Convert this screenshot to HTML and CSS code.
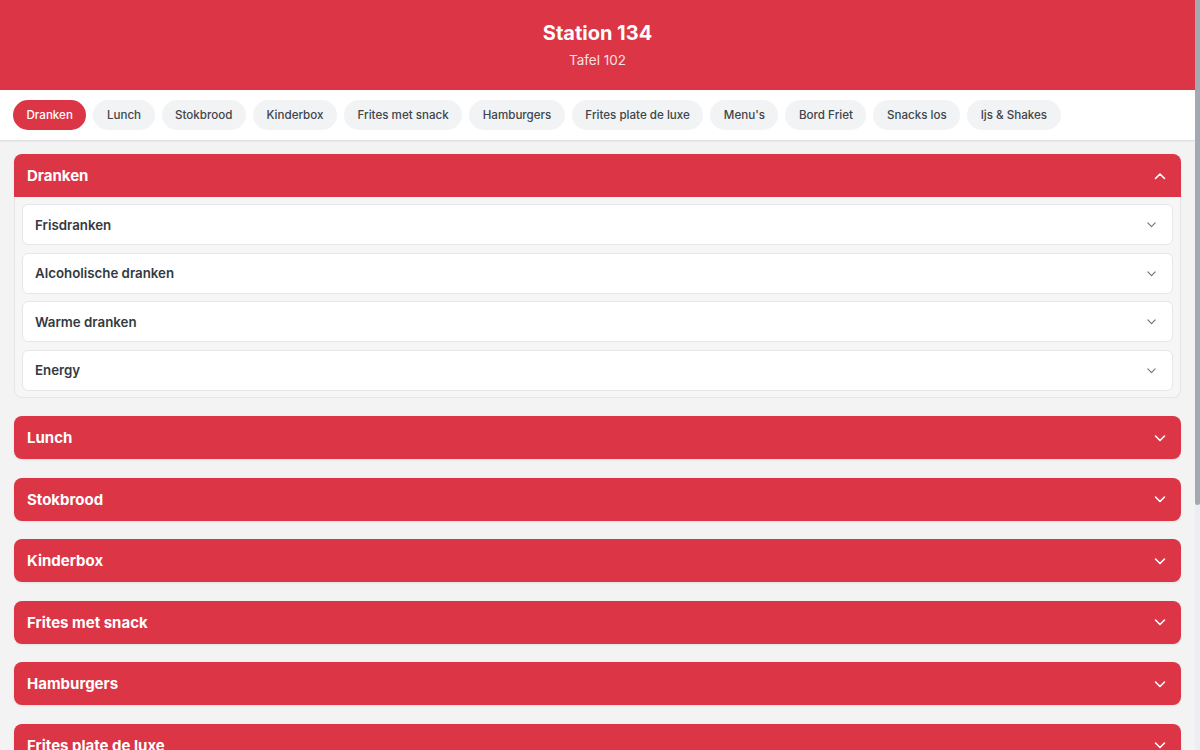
FILE: index.html
```html
<!DOCTYPE html>
<html lang="nl">
<head>
    <meta charset="UTF-8">
    <meta name="viewport" content="width=device-width, initial-scale=1.0">
    <title>Station 134 - Tafel 102</title>
    <link rel="stylesheet" href="styles.css">
</head>
<body>
    <header class="header">
        <h1>Station 134</h1>
        <p>Tafel 102</p>
    </header>

    <nav class="tabs">
        <a class="tab active">Dranken</a>
        <a class="tab">Lunch</a>
        <a class="tab">Stokbrood</a>
        <a class="tab">Kinderbox</a>
        <a class="tab">Frites met snack</a>
        <a class="tab">Hamburgers</a>
        <a class="tab">Frites plate de luxe</a>
        <a class="tab">Menu's</a>
        <a class="tab">Bord Friet</a>
        <a class="tab">Snacks los</a>
        <a class="tab">Ijs &amp; Shakes</a>
    </nav>

    <main class="menu">
        <section class="category open">
            <div class="category-head">
                <span>Dranken</span>
                <svg class="chev" viewBox="0 0 16 16"><path d="M3.5 10.5 8 6l4.5 4.5"/></svg>
            </div>
            <div class="category-body">
                <div class="sub">
                    <span>Frisdranken</span>
                    <svg class="chev small" viewBox="0 0 16 16"><path d="M3.5 6 8 10.5 12.5 6"/></svg>
                </div>
                <div class="sub">
                    <span>Alcoholische dranken</span>
                    <svg class="chev small" viewBox="0 0 16 16"><path d="M3.5 6 8 10.5 12.5 6"/></svg>
                </div>
                <div class="sub">
                    <span>Warme dranken</span>
                    <svg class="chev small" viewBox="0 0 16 16"><path d="M3.5 6 8 10.5 12.5 6"/></svg>
                </div>
                <div class="sub">
                    <span>Energy</span>
                    <svg class="chev small" viewBox="0 0 16 16"><path d="M3.5 6 8 10.5 12.5 6"/></svg>
                </div>
            </div>
        </section>

        <section class="category">
            <div class="category-head">
                <span>Lunch</span>
                <svg class="chev" viewBox="0 0 16 16"><path d="M3.5 6 8 10.5 12.5 6"/></svg>
            </div>
        </section>
        <section class="category">
            <div class="category-head">
                <span>Stokbrood</span>
                <svg class="chev" viewBox="0 0 16 16"><path d="M3.5 6 8 10.5 12.5 6"/></svg>
            </div>
        </section>
        <section class="category">
            <div class="category-head">
                <span>Kinderbox</span>
                <svg class="chev" viewBox="0 0 16 16"><path d="M3.5 6 8 10.5 12.5 6"/></svg>
            </div>
        </section>
        <section class="category">
            <div class="category-head">
                <span>Frites met snack</span>
                <svg class="chev" viewBox="0 0 16 16"><path d="M3.5 6 8 10.5 12.5 6"/></svg>
            </div>
        </section>
        <section class="category">
            <div class="category-head">
                <span>Hamburgers</span>
                <svg class="chev" viewBox="0 0 16 16"><path d="M3.5 6 8 10.5 12.5 6"/></svg>
            </div>
        </section>
        <section class="category">
            <div class="category-head">
                <span>Frites plate de luxe</span>
                <svg class="chev" viewBox="0 0 16 16"><path d="M3.5 6 8 10.5 12.5 6"/></svg>
            </div>
        </section>
        <section class="category">
            <div class="category-head">
                <span>Menu's</span>
                <svg class="chev" viewBox="0 0 16 16"><path d="M3.5 6 8 10.5 12.5 6"/></svg>
            </div>
        </section>
        <section class="category">
            <div class="category-head">
                <span>Bord Friet</span>
                <svg class="chev" viewBox="0 0 16 16"><path d="M3.5 6 8 10.5 12.5 6"/></svg>
            </div>
        </section>
    </main>

    <!-- page scrollbar, drawn since the browser hides its own -->
    <div class="scrollbar"><div class="scrollbar-thumb"></div></div>
</body>
</html>
```

FILE: styles.css
```css
* {
    margin: 0;
    padding: 0;
    box-sizing: border-box;
}

body {
    font-family: 'Inter', 'Noto Sans', sans-serif;
    background: #f3f3f4;
    color: #343a40;
    padding-right: 5px;
}

.header {
    background: #dc3545;
    color: white;
    text-align: center;
    height: 90px;
    padding-top: 20px;
}

.header h1 {
    font-size: 20px;
    font-weight: 700;
    line-height: 26px;
}

.header p {
    font-size: 13.5px;
    margin-top: 6px;
    opacity: 0.85;
}

.tabs {
    background: white;
    display: flex;
    gap: 7px;
    padding: 10px 13px;
    border-bottom: 1px solid #dedfe1;
    box-shadow: 0 1px 2px rgba(0, 0, 0, 0.04);
    height: 51px;
}

.tab {
    background: #f1f3f5;
    color: #3f454b;
    font-size: 11.6px;
    font-weight: 500;
    height: 30px;
    line-height: 30px;
    padding: 0 13.5px;
    border-radius: 15px;
    white-space: nowrap;
}

.tab.active {
    background: #dc3545;
    color: white;
}

.menu {
    padding: 13px 14px;
}

.category {
    margin-bottom: 18.5px;
}

.category-head {
    background: #dc3545;
    color: white;
    height: 43px;
    border-radius: 8px;
    padding: 0 13px;
    display: flex;
    align-items: center;
    justify-content: space-between;
    font-size: 15px;
    font-weight: 700;
    box-shadow: 0 1px 2px rgba(0, 0, 0, 0.08);
}

.category.open .category-head {
    border-radius: 8px 8px 0 0;
}

.category-body {
    background: #f6f6f7;
    border: 1px solid #e4e5e7;
    border-top: none;
    border-radius: 0 0 8px 8px;
    padding: 7px 7px 6px;
    display: flex;
    flex-direction: column;
    gap: 7.5px;
}

.sub {
    background: white;
    border: 1px solid #e5e6e8;
    border-radius: 6px;
    height: 41px;
    padding: 0 14px 0 12px;
    display: flex;
    align-items: center;
    justify-content: space-between;
    font-size: 13.3px;
    font-weight: 600;
    color: #343a40;
}

.chev {
    width: 16px;
    height: 16px;
    fill: none;
    stroke: white;
    stroke-width: 1.6;
    stroke-linecap: round;
    stroke-linejoin: round;
}

.chev.small {
    width: 13px;
    height: 13px;
    stroke: #6c757d;
    stroke-width: 1.4;
}

.scrollbar {
    position: fixed;
    top: 0;
    right: 0;
    width: 5px;
    height: 100vh;
    background: #eceef1;
}

.scrollbar-thumb {
    height: 505px;
    background: #a3a8b1;
    border-radius: 0 0 3px 3px;
}
```
